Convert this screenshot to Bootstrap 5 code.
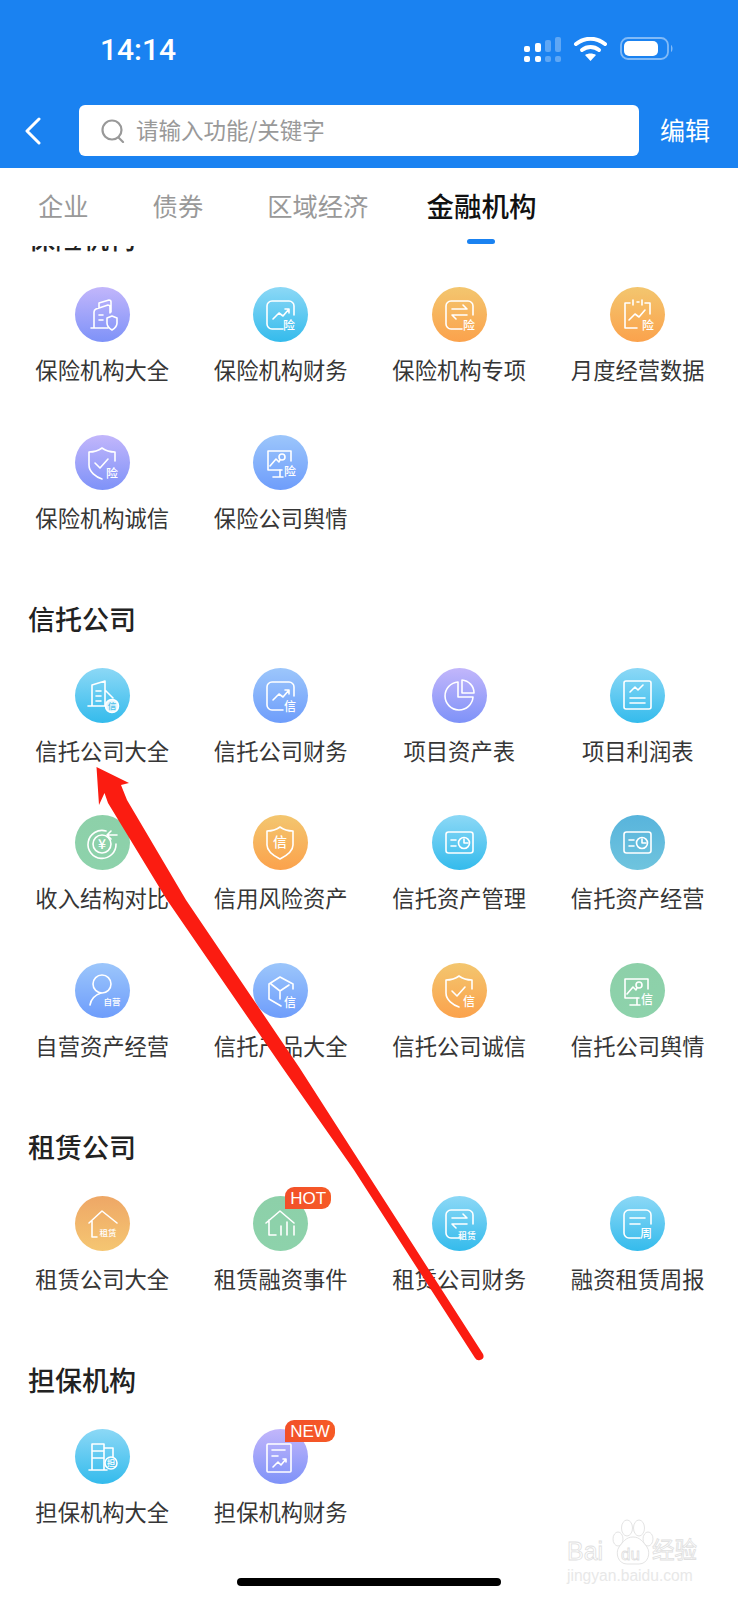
<!DOCTYPE html>
<html lang="zh-CN">
<head>
    <meta charset="UTF-8">
    <meta name="viewport" content="width=device-width, initial-scale=1.0">
    <title>金融机构</title>
    <link href="https://cdn.jsdelivr.net/npm/bootstrap@5.3.0/dist/css/bootstrap.min.css" rel="stylesheet">
    <style>
        body {
            width: 738px;
            height: 1600px;
            overflow: hidden;
            background: #fff;
            color: #333;
            font-family: "Noto Sans CJK SC", "Liberation Sans", sans-serif;
        }
        .page-wrap { width: 738px; height: 1600px; overflow: hidden; }
        .app-head { height: 168px; background: #1a82f1; color: #fff; }
        .status-row { height: 105px; padding: 33px 64px 0 100px; }
        .clock { font-family: Roboto, "Liberation Sans", sans-serif; font-weight: 500; font-size: 30px; line-height: 34px; }
        .search-row { height: 51px; }
        .back-btn { width: 79px; padding-left: 24px; }
        .search-box { width: 560px; height: 51px; border-radius: 6px; padding-left: 22px; gap: 11px; }
        .search-text { color: #999; font-size: 22.5px; line-height: 30px; padding-bottom: 4px; }
        .edit-btn { margin-left: 21px; padding-bottom: 3px; font-size: 25px; line-height: 32px; }
        .tab-bar { height: 78px; padding-left: 38px; }
        .tab-item { margin-right: 64px; color: #999; font-size: 25.3px; line-height: 36px; padding-top: 19px; }
        .tab-item.now { margin-left: -6px; color: #111; font-size: 27.5px; font-weight: 500; }
        .tab-mark { width: 28px; height: 5px; margin-top: 16px; border-radius: 3px; background: #1a82f1; }
        .scroll-area { height: 1354px; overflow: hidden; }
        .scroll-inner { margin-top: -26px; }
        .sec-block + .sec-block { margin-top: 66.3px; }
        .sec-title { margin: 0 0 31px 28px; font-size: 27px; line-height: 36px; font-weight: 500; color: #222; }
        .fn-grid { margin: 0 11px 0 13px; row-gap: 47.5px; }
        .fn-item { height: 100px; }
        .fn-icon { width: 55px; height: 55px; border-radius: 50%; }
        .fn-svg { display: block; width: 55px; height: 55px; fill: none; stroke: #fff; stroke-width: 1.6; stroke-linecap: round; stroke-linejoin: round; }
        .fn-svg text { fill: #fff; stroke: none; text-anchor: middle; font-family: "Noto Sans CJK SC", sans-serif; font-weight: 500; font-size: 12px; }
        .fn-svg text.tiny { font-size: 8.5px; }
        .fn-name { margin-top: 12px; font-size: 22.3px; line-height: 30px; color: #363636; white-space: nowrap; }
        .ic-purple { background: linear-gradient(#c2b6fb, #7e92f8); }
        .ic-sky { background: linear-gradient(#8cd8f6, #34bbec); }
        .ic-orange { background: linear-gradient(#f3c66f, #fba24c); }
        .ic-blue { background: linear-gradient(#9cc6fb, #6e9dfb); }
        .ic-green { background: linear-gradient(#8dd0a9, #8dd2ab); }
        .ic-teal { background: linear-gradient(#58b4dc, #6fc4de); }
        .ic-amber { background: linear-gradient(#eea766, #f5c672); }
        .flag-tag {
            top: -9px;
            left: 32px;
            height: 22px;
            padding: 0 5px;
            background: linear-gradient(90deg, #f2502a, #f65a26);
            border-radius: 9px 9px 9px 0;
            color: #fff;
            font-family: "Liberation Sans", sans-serif;
            font-size: 17px;
            line-height: 23px;
        }
        .home-bar { left: 237px; top: 1578px; width: 264px; height: 8px; border-radius: 4px; background: #000; }
        .arrow-mark { left: 0; top: 0; width: 738px; height: 1600px; pointer-events: none; }
        .baidu-mark { left: 560px; top: 1515px; width: 145px; height: 72px; }
        .baidu-mark text { font-family: "Liberation Sans", sans-serif; fill: #fff; stroke: #e0e0e0; stroke-width: .8; }
        .baidu-mark text.cn { font-family: "Noto Sans CJK SC", sans-serif; }
        .baidu-mark text.url { fill: #e8e8e8; stroke: none; font-size: 15.6px; }
    </style>
</head>
<body>
<svg width="0" height="0" class="position-absolute">
    <defs>
        <symbol id="i-bldg-shield" viewBox="0 0 55 55">
            <path d="M16 41H33M19 41V25q0-2 2-3l12-4M24 21v-5l10-3q2 0 2 2v10M33 18q2 0 2 2v6M24 28h4M24 33h4"/>
            <path d="M37 29l5 2v5q0 4-5 7q-5-3-5-7v-5z"/>
        </symbol>
        <symbol id="i-card-chart" viewBox="0 0 55 55">
            <path d="M30 42H19a5 5 0 0 1-5-5V19a5 5 0 0 1 5-5H36a5 5 0 0 1 5 5V28"/>
            <path d="M20 32l6-6 4 3 6-7M32 22h4v4"/>
        </symbol>
        <symbol id="i-card-swap" viewBox="0 0 55 55">
            <path d="M30 42H19a5 5 0 0 1-5-5V19a5 5 0 0 1 5-5H36a5 5 0 0 1 5 5V28"/>
            <path d="M20 22H35L31 18M35 28H20L24 32"/>
        </symbol>
        <symbol id="i-card-lines" viewBox="0 0 55 55">
            <path d="M30 42H19a5 5 0 0 1-5-5V19a5 5 0 0 1 5-5H36a5 5 0 0 1 5 5V28"/>
            <path d="M20 22H35M20 28H30"/>
        </symbol>
        <symbol id="i-cal-chart" viewBox="0 0 55 55">
            <path d="M20 16H15V41H27M35 16H40V27M23 13v5M32 13v5M27 15h2"/>
            <path d="M19 33l6-6 4 3 6-7"/>
        </symbol>
        <symbol id="i-shield-check" viewBox="0 0 55 55">
            <path d="M27 13c-4 3-8 4-13 4V30c0 7 7 12 13 14M27 13c4 3 8 4 13 4V26"/>
            <path d="M20 28l5 5 8-9"/>
        </symbol>
        <symbol id="i-board" viewBox="0 0 55 55">
            <path d="M29 35H15V16H38V26M17 31l6-7 3 3M26 27l1-2"/>
            <circle cx="29" cy="22" r="3"/>
            <path d="M20 42H30M27 35V42"/>
        </symbol>
        <symbol id="i-bldg-round" viewBox="0 0 55 55">
            <path d="M13 38H30M17 38V17L30 13V38M21 23h5M21 28h5M21 33h5M30 22l8 8"/>
            <circle cx="37" cy="38" r="6.5" fill="#fff" fill-opacity=".85"/>
        </symbol>
        <symbol id="i-pie" viewBox="0 0 55 55">
            <path d="M26 14A14 14 0 1 0 41 29H26z"/>
            <path d="M30 12a13 13 0 0 1 12 13H30z"/>
        </symbol>
        <symbol id="i-report" viewBox="0 0 55 55">
            <rect x="14" y="13" width="27" height="28" rx="2"/>
            <path d="M20 24l5-5 3 3 5-5M20 30H35M20 35H35"/>
        </symbol>
        <symbol id="i-yen" viewBox="0 0 55 55">
            <path d="M31 16a14 14 0 1 0 10 13M42 20H33M36 16l-4 4 4 4"/>
            <circle cx="27" cy="29" r="9"/>
        </symbol>
        <symbol id="i-shield" viewBox="0 0 55 55">
            <path d="M27 12c-4 3-8 4-13 4V30c0 7 7 11 13 14c6-3 13-7 13-14V16c-5 0-9-1-13-4z"/>
        </symbol>
        <symbol id="i-asset" viewBox="0 0 55 55">
            <rect x="14" y="17" width="27" height="21" rx="2.5"/>
            <path d="M19 25h5M19 31h5"/>
            <circle cx="32" cy="28" r="5.5"/>
            <path d="M32 24v4h4"/>
        </symbol>
        <symbol id="i-person" viewBox="0 0 55 55">
            <circle cx="27" cy="21" r="9"/>
            <path d="M15 42c1-6 5-10 11-12"/>
        </symbol>
        <symbol id="i-cube" viewBox="0 0 55 55">
            <path d="M28 43L16 36V21L27 14L40 21V26M18 21l9 7 9-6M27 28v8"/>
        </symbol>
        <symbol id="i-house" viewBox="0 0 55 55">
            <path d="M14 27L27 15L42 27M17 25V41H22"/>
        </symbol>
        <symbol id="i-house-bars" viewBox="0 0 55 55">
            <path d="M13 27L27 15L41 27M16 24V39H23M28 30V39M34 26V39M41 30V39"/>
        </symbol>
        <symbol id="i-bldg-plain" viewBox="0 0 55 55">
            <path d="M14 41H32M17 41V15H29V41M17 22H29M17 29H29M29 19h9v9"/>
            <circle cx="36" cy="34" r="6"/>
        </symbol>
        <symbol id="i-report-line" viewBox="0 0 55 55">
            <rect x="14" y="15" width="24" height="28" rx="1"/>
            <path d="M19 21H32M19 27H25M20 38l5-5 3 3 5-6M30 30h3v3"/>
        </symbol>
    </defs>
</svg>

<div class="page-wrap position-relative">
    <header class="app-head">
        <div class="status-row d-flex justify-content-between">
            <span class="clock">14:14</span>
            <svg width="150" height="26" viewBox="524 37 150 26" class="d-block mt-1">
                <g fill="#fff">
                    <rect x="524" y="46" width="6" height="6" rx="2"/>
                    <rect x="535" y="43" width="6" height="9" rx="2"/>
                    <rect x="524" y="56" width="6" height="6" rx="2"/>
                    <rect x="535" y="56" width="6" height="6" rx="2"/>
                </g>
                <g fill="#fff" fill-opacity=".3">
                    <rect x="545" y="40" width="6" height="12" rx="2"/>
                    <rect x="555" y="37" width="6" height="15" rx="2"/>
                    <rect x="545" y="56" width="6" height="6" rx="2"/>
                    <rect x="555" y="56" width="6" height="6" rx="2"/>
                </g>
                <g fill="none" stroke="#fff" stroke-width="4" stroke-linecap="round">
                    <path d="M576 44c9-7 20-7 29 0"/>
                    <path d="M582 50c5-4 12-4 17 0"/>
                </g>
                <path d="M585 55c3-2 8-2 11 0l-5.500 6z" fill="#fff"/>
                <rect x="621" y="38" width="47" height="21" rx="7" fill="none" stroke="#fff" stroke-opacity=".45" stroke-width="1.800"/>
                <rect x="624" y="41" width="34" height="15" rx="5" fill="#fff"/>
                <path d="M671 45c2 1 2 6 0 7z" fill="#fff" fill-opacity=".45"/>
            </svg>
        </div>
        <div class="search-row d-flex align-items-center">
            <div class="back-btn">
                <svg width="17" height="28" viewBox="0 0 17 28" class="d-block" fill="none" stroke="#fff" stroke-width="3" stroke-linecap="round" stroke-linejoin="round">
                    <path d="M15 2L3 14L15 26"/>
                </svg>
            </div>
            <div class="search-box bg-white d-flex align-items-center">
                <svg width="24" height="24" viewBox="0 0 24 24" fill="none" stroke="#999" stroke-width="2.200" stroke-linecap="round">
                    <circle cx="11" cy="11" r="9.500"/>
                    <path d="M18 19l4 4"/>
                </svg>
                <span class="search-text">请输入功能/关键字</span>
            </div>
            <span class="edit-btn">编辑</span>
        </div>
    </header>

    <nav class="tab-bar d-flex bg-white">
        <div class="tab-item">企业</div>
        <div class="tab-item">债券</div>
        <div class="tab-item">区域经济</div>
        <div class="tab-item now d-flex flex-column align-items-center">金融机构<span class="tab-mark"></span></div>
    </nav>

    <main class="scroll-area">
        <div class="scroll-inner">
            <section class="sec-block">
                <h2 class="sec-title">保险机构</h2>
                <div class="row g-0 fn-grid">
                    <div class="col-3 fn-item d-flex flex-column align-items-center"><div class="fn-icon ic-purple"><svg class="fn-svg"><use href="#i-bldg-shield"/></svg></div><div class="fn-name">保险机构大全</div></div>
                    <div class="col-3 fn-item d-flex flex-column align-items-center"><div class="fn-icon ic-sky"><svg class="fn-svg"><use href="#i-card-chart"/><text x="36" y="43">险</text></svg></div><div class="fn-name">保险机构财务</div></div>
                    <div class="col-3 fn-item d-flex flex-column align-items-center"><div class="fn-icon ic-orange"><svg class="fn-svg"><use href="#i-card-swap"/><text x="37" y="43">险</text></svg></div><div class="fn-name">保险机构专项</div></div>
                    <div class="col-3 fn-item d-flex flex-column align-items-center"><div class="fn-icon ic-orange"><svg class="fn-svg"><use href="#i-cal-chart"/><text x="38" y="43">险</text></svg></div><div class="fn-name">月度经营数据</div></div>
                    <div class="col-3 fn-item d-flex flex-column align-items-center"><div class="fn-icon ic-purple"><svg class="fn-svg"><use href="#i-shield-check"/><text x="37" y="43">险</text></svg></div><div class="fn-name">保险机构诚信</div></div>
                    <div class="col-3 fn-item d-flex flex-column align-items-center"><div class="fn-icon ic-blue"><svg class="fn-svg"><use href="#i-board"/><text x="37" y="41">险</text></svg></div><div class="fn-name">保险公司舆情</div></div>
                </div>
            </section>

            <section class="sec-block">
                <h2 class="sec-title">信托公司</h2>
                <div class="row g-0 fn-grid">
                    <div class="col-3 fn-item d-flex flex-column align-items-center"><div class="fn-icon ic-sky"><svg class="fn-svg"><use href="#i-bldg-round"/><text x="37" y="41" class="tiny" style="fill:#4cc0ea">信</text></svg></div><div class="fn-name">信托公司大全</div></div>
                    <div class="col-3 fn-item d-flex flex-column align-items-center"><div class="fn-icon ic-blue"><svg class="fn-svg"><use href="#i-card-chart"/><text x="37" y="43">信</text></svg></div><div class="fn-name">信托公司财务</div></div>
                    <div class="col-3 fn-item d-flex flex-column align-items-center"><div class="fn-icon ic-purple"><svg class="fn-svg"><use href="#i-pie"/></svg></div><div class="fn-name">项目资产表</div></div>
                    <div class="col-3 fn-item d-flex flex-column align-items-center"><div class="fn-icon ic-sky"><svg class="fn-svg"><use href="#i-report"/></svg></div><div class="fn-name">项目利润表</div></div>
                    <div class="col-3 fn-item d-flex flex-column align-items-center"><div class="fn-icon ic-green"><svg class="fn-svg"><use href="#i-yen"/><text x="27" y="34" style="font-size:14px">¥</text></svg></div><div class="fn-name">收入结构对比</div></div>
                    <div class="col-3 fn-item d-flex flex-column align-items-center"><div class="fn-icon ic-orange"><svg class="fn-svg"><use href="#i-shield"/><text x="27" y="32" style="font-size:14px">信</text></svg></div><div class="fn-name">信用风险资产</div></div>
                    <div class="col-3 fn-item d-flex flex-column align-items-center"><div class="fn-icon ic-sky"><svg class="fn-svg"><use href="#i-asset"/></svg></div><div class="fn-name">信托资产管理</div></div>
                    <div class="col-3 fn-item d-flex flex-column align-items-center"><div class="fn-icon ic-teal"><svg class="fn-svg"><use href="#i-asset"/></svg></div><div class="fn-name">信托资产经营</div></div>
                    <div class="col-3 fn-item d-flex flex-column align-items-center"><div class="fn-icon ic-blue"><svg class="fn-svg"><use href="#i-person"/><text x="37" y="42" class="tiny">自营</text></svg></div><div class="fn-name">自营资产经营</div></div>
                    <div class="col-3 fn-item d-flex flex-column align-items-center"><div class="fn-icon ic-blue"><svg class="fn-svg"><use href="#i-cube"/><text x="37" y="44">信</text></svg></div><div class="fn-name">信托产品大全</div></div>
                    <div class="col-3 fn-item d-flex flex-column align-items-center"><div class="fn-icon ic-orange"><svg class="fn-svg"><use href="#i-shield-check"/><text x="37" y="43">信</text></svg></div><div class="fn-name">信托公司诚信</div></div>
                    <div class="col-3 fn-item d-flex flex-column align-items-center"><div class="fn-icon ic-green"><svg class="fn-svg"><use href="#i-board"/><text x="37" y="41">信</text></svg></div><div class="fn-name">信托公司舆情</div></div>
                </div>
            </section>

            <section class="sec-block">
                <h2 class="sec-title">租赁公司</h2>
                <div class="row g-0 fn-grid">
                    <div class="col-3 fn-item d-flex flex-column align-items-center"><div class="fn-icon ic-amber"><svg class="fn-svg"><use href="#i-house"/><text x="33" y="40" class="tiny">租赁</text></svg></div><div class="fn-name">租赁公司大全</div></div>
                    <div class="col-3 fn-item d-flex flex-column align-items-center"><div class="fn-icon ic-green position-relative"><svg class="fn-svg"><use href="#i-house-bars"/></svg><span class="flag-tag position-absolute">HOT</span></div><div class="fn-name">租赁融资事件</div></div>
                    <div class="col-3 fn-item d-flex flex-column align-items-center"><div class="fn-icon ic-sky"><svg class="fn-svg"><use href="#i-card-swap"/><text x="35" y="43" class="tiny" style="font-size:9px">租赁</text></svg></div><div class="fn-name">租赁公司财务</div></div>
                    <div class="col-3 fn-item d-flex flex-column align-items-center"><div class="fn-icon ic-sky"><svg class="fn-svg"><use href="#i-card-lines"/><text x="36" y="42">周</text></svg></div><div class="fn-name">融资租赁周报</div></div>
                </div>
            </section>

            <section class="sec-block">
                <h2 class="sec-title">担保机构</h2>
                <div class="row g-0 fn-grid">
                    <div class="col-3 fn-item d-flex flex-column align-items-center"><div class="fn-icon ic-sky"><svg class="fn-svg"><use href="#i-bldg-plain"/><text x="36" y="37" class="tiny">担</text></svg></div><div class="fn-name">担保机构大全</div></div>
                    <div class="col-3 fn-item d-flex flex-column align-items-center"><div class="fn-icon ic-purple position-relative"><svg class="fn-svg"><use href="#i-report-line"/></svg><span class="flag-tag position-absolute">NEW</span></div><div class="fn-name">担保机构财务</div></div>
                </div>
            </section>
        </div>
    </main>

    <svg class="baidu-mark position-absolute" viewBox="560 1515 145 72">
        <g fill="#fff" stroke="#e0e0e0" stroke-width=".9">
            <ellipse cx="618" cy="1539" rx="5" ry="7"/>
            <ellipse cx="627" cy="1528" rx="5.500" ry="8"/>
            <ellipse cx="639" cy="1528" rx="5.500" ry="8"/>
            <ellipse cx="648" cy="1539" rx="5" ry="7"/>
            <path d="M633 1537c7 0 10 5 14 10c4 6 1 17-8 17h-12c-9 0-12-11-8-17c4-5 7-10 14-10z"/>
        </g>
        <text x="567" y="1560" font-size="25">Bai</text>
        <text x="621" y="1560" font-size="17">du</text>
        <text class="cn" x="652" y="1558" font-size="22.500">经验</text>
        <text class="url" x="567" y="1581">jingyan.baidu.com</text>
    </svg>

    <svg class="arrow-mark position-absolute" viewBox="0 0 738 1600">
        <path d="M96.500 767L129 783L121 785L127 800L186 900L299 1067L365 1170L483 1354Q485 1359 480 1360Q477 1361 475 1358L354 1170L282 1067L167 900L108 803L104.500 793L99 805z" fill="#fb1c11"/>
    </svg>

    <div class="home-bar position-absolute"></div>
</div>

<script src="https://cdn.jsdelivr.net/npm/bootstrap@5.3.0/dist/js/bootstrap.bundle.min.js"></script>
</body>
</html>
